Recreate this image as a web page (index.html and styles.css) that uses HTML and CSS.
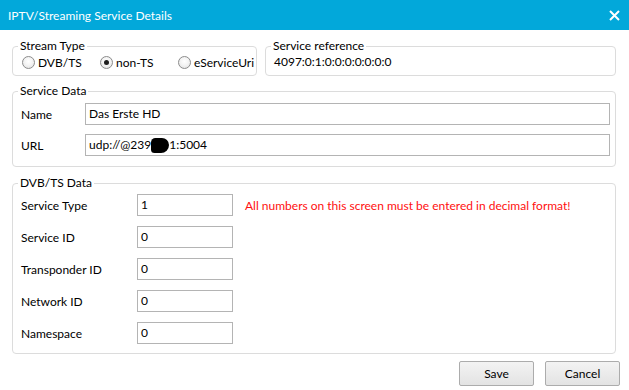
FILE: index.html
```html
<!DOCTYPE html>
<html lang="en">
<head>
    <meta charset="UTF-8">
    <meta name="viewport" content="width=device-width, initial-scale=1.0">
    <title>IPTV/Streaming Service Details</title>
    <link rel="stylesheet" href="styles.css">
</head>
<body>
    <div class="dialog">
        <div class="titlebar">
            <span class="title">IPTV/Streaming Service Details</span>
            <svg class="close" width="11" height="11" viewBox="0 0 11 11">
                <path d="M1 1 L10 10 M10 1 L1 10" stroke="#ffffff" stroke-width="2" fill="none"/>
            </svg>
        </div>

        <div class="content">
            <div class="top-row">
                <fieldset class="group stream-type">
                    <legend>Stream Type</legend>
                    <div class="radios">
                        <label class="radio"><span class="dot"></span>DVB/TS</label>
                        <label class="radio"><span class="dot checked"></span>non-TS</label>
                        <label class="radio"><span class="dot"></span>eServiceUri</label>
                    </div>
                </fieldset>

                <fieldset class="group service-ref">
                    <legend>Service reference</legend>
                    <div class="ref-value">4097:0:1:0:0:0:0:0:0:0</div>
                </fieldset>
            </div>

            <fieldset class="group service-data">
                <legend>Service Data</legend>
                <div class="form-grid wide">
                    <span class="label">Name</span>
                    <div class="textbox">Das Erste HD</div>

                    <span class="label">URL</span>
                    <div class="textbox">udp://@239<span class="blot"></span>1:5004</div>
                </div>
            </fieldset>

            <fieldset class="group dvb-data">
                <legend>DVB/TS Data</legend>
                <div class="form-grid narrow">
                    <span class="label">Service Type</span>
                    <div class="textbox">1</div>
                    <span class="warning">All numbers on this screen must be entered in decimal format!</span>

                    <span class="label">Service ID</span>
                    <div class="textbox">0</div>
                    <span></span>

                    <span class="label">Transponder ID</span>
                    <div class="textbox">0</div>
                    <span></span>

                    <span class="label">Network ID</span>
                    <div class="textbox">0</div>
                    <span></span>

                    <span class="label">Namespace</span>
                    <div class="textbox">0</div>
                    <span></span>
                </div>
            </fieldset>

            <div class="buttons">
                <button type="button">Save</button>
                <button type="button">Cancel</button>
            </div>
        </div>
    </div>
</body>
</html>
```

FILE: styles.css
```css
/* Dialog base */
body {
    margin: 0;
    background-color: #ffffff;
    font-family: Lato, "Open Sans", sans-serif;
    font-size: 12px;
    color: #000000;
}

.dialog {
    width: 629px;
    height: 390px;
    overflow: hidden;
}

.titlebar {
    height: 30px;
    background-color: #02a8da; /* Windows 10 accent blue */
    color: #ffffff;
    display: flex;
    align-items: center;
    justify-content: space-between;
    padding: 0 9px 0 8px;
    box-sizing: border-box;
}

.title {
    font-size: 12px;
}

.content {
    padding: 9px 13px 0 12px;
}

/* Group boxes */
.group {
    margin: 0;
    padding: 0 5px 0 7px;
    border: 1px solid #dcdcdc;
    border-radius: 4px;
    min-width: 0;
}

.group legend {
    padding: 0 2px;
    margin-left: -2px;
    line-height: 14px;
    color: #000000;
}

.top-row {
    display: flex;
    gap: 8px;
}

.stream-type {
    width: 245px;
    box-sizing: border-box;
    padding-bottom: 5px;
}

.service-ref {
    flex: 1;
    padding-bottom: 5px;
}

.radios {
    display: flex;
    align-items: center;
    height: 16px;
    margin-top: 1px;
    padding-left: 2px;
}

.radio {
    display: flex;
    align-items: center;
    gap: 3px;
    width: 78px;
    flex-shrink: 0;
    white-space: nowrap;
}

.radio:last-child {
    width: auto;
}

.dot {
    width: 13px;
    height: 13px;
    flex-shrink: 0;
    box-sizing: border-box;
    border: 1px solid #8c8c8c;
    border-radius: 50%;
    background: radial-gradient(circle at 50% 40%, #ffffff 0%, #f4f4f4 45%, #dedede 100%);
    display: flex;
    align-items: center;
    justify-content: center;
}

.dot.checked::after {
    content: "";
    width: 5px;
    height: 5px;
    border-radius: 50%;
    background-color: #1e1e1e;
}

.ref-value {
    height: 16px;
    line-height: 16px;
    margin-top: 1px;
    padding-left: 1px;
}

.service-data {
    margin-top: 8px;
    padding-top: 5px;
    padding-bottom: 10px;
}

.dvb-data {
    margin-top: 9px;
    padding-top: 4px;
    padding-bottom: 9px;
}

/* Label + field rows */
.form-grid {
    display: grid;
    align-items: center;
}

.form-grid.wide {
    grid-template-columns: 65px 1fr;
    row-gap: 9px;
}

.form-grid.narrow {
    grid-template-columns: 117px 96px 1fr;
    row-gap: 10px;
}

.label {
    padding-left: 1px;
}

.textbox {
    height: 22px;
    line-height: 20px;
    box-sizing: border-box;
    border: 1px solid #b4b4b4;
    background-color: #ffffff;
    padding-left: 3px;
    white-space: nowrap;
}

/* blacked out part of the address */
.blot {
    display: inline-block;
    width: 18px;
    height: 15px;
    background-color: #000000;
    border-radius: 5px 8px 9px 4px;
    vertical-align: -4px;
}

.warning {
    color: #ff1010;
    padding-left: 12px;
    white-space: nowrap;
}

.buttons {
    display: flex;
    justify-content: flex-end;
    gap: 11px;
    margin-top: 7px;
    margin-right: -4px;
}

button {
    width: 75px;
    height: 25px;
    border: 1px solid #acacac;
    border-radius: 2px;
    background: linear-gradient(#f3f3f3, #e3e3e3);
    font-family: Lato, "Open Sans", sans-serif;
    font-size: 12px;
    color: #000000;
    padding: 0;
}
```
